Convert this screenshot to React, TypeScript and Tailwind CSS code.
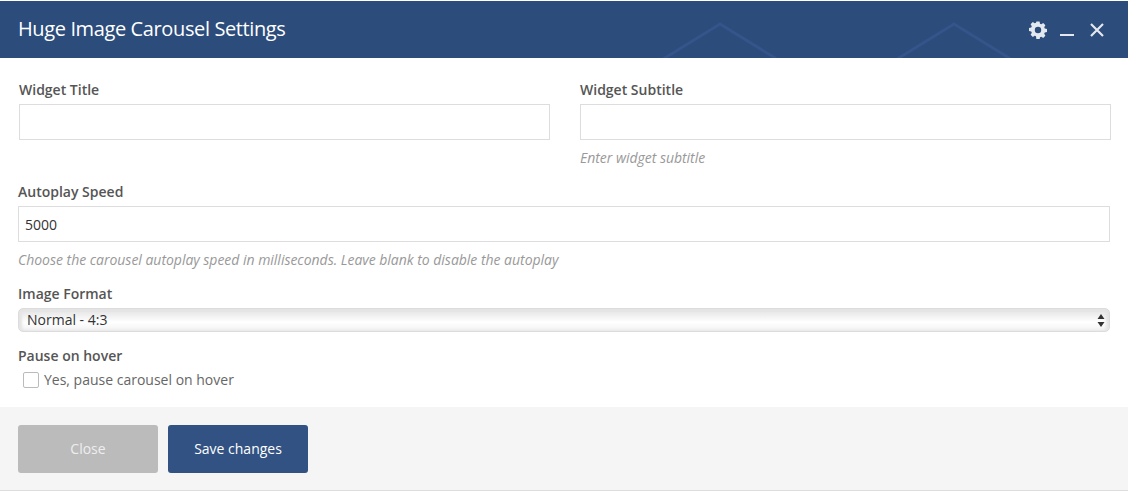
function HeaderIcons() {
  return (
    <div className="flex items-center text-[#e3e7ee]">
      {/* gear */}
      <svg width="18" height="18" viewBox="0 0 18 18" fill="currentColor" fillRule="evenodd">
        <path d="M7.4 0.5h3.2l.4 2.2 1.3.6 1.9-1.2 2.2 2.2-1.2 1.9.6 1.3 2.2.4v3.2l-2.2.4-.6 1.3 1.2 1.9-2.2 2.2-1.9-1.2-1.3.6-.4 2.2H7.4L7 15.3l-1.3-.6-1.9 1.2-2.2-2.2 1.2-1.9-.6-1.3-2.2-.4V6.9l2.2-.4.6-1.3-1.2-1.9 2.2-2.2 1.9 1.2L7 1.7zM9 5.8a3.2 3.2 0 1 0 0 6.4 3.2 3.2 0 0 0 0-6.4z" />
      </svg>
      <span className="ml-[13px] mt-[11px] block h-[2px] w-[14px] bg-[#e3e7ee]" />
      <svg width="14" height="14" viewBox="0 0 14 14" stroke="currentColor" strokeWidth="2.2" className="ml-[16px]">
        <path d="M1 1l12 12M13 1L1 13" />
      </svg>
    </div>
  );
}

export default function App() {
  return (
    <div className="h-[492px] w-[1128px] overflow-hidden bg-white pt-px font-['Open_Sans',sans-serif] text-[#555]">
      {/* Header */}
      <div className="relative flex h-[57px] items-center justify-between overflow-hidden bg-[#2c4c7c] pl-[18px] pr-[24px]">
        <h1 className="-mt-[2px] text-[20px] leading-none tracking-[-0.38px] text-white">Huge Image Carousel Settings</h1>
        <svg className="absolute left-[640px] top-0" width="400" height="57" viewBox="0 0 400 57" fill="none" stroke="#34548a" strokeWidth="3">
          <path d="M20 60L80 23L140 60M254 60L314 23L374 60" />
        </svg>
        <div className="relative">
          <HeaderIcons />
        </div>
      </div>

      {/* Form */}
      <div className="h-[349px] px-[18px]">
        <div className="grid grid-cols-[531px_531px] gap-x-[30px] pl-px pt-[22px]">
          <div>
            <label className="block text-[14px] font-semibold leading-[19px]">Widget Title</label>
            <input type="text" className="mt-[5px] block h-[36px] w-full border border-[#ddd] bg-white" />
          </div>
          <div>
            <label className="block text-[14px] font-semibold leading-[19px]">Widget Subtitle</label>
            <input type="text" className="mt-[5px] block h-[36px] w-full border border-[#ddd] bg-white" />
            <p className="mt-[9px] text-[14px] italic leading-[17px] tracking-[-0.023px] text-[#999]">Enter widget subtitle</p>
          </div>
        </div>

        <div className="mt-[16px]">
          <label className="block text-[14px] font-semibold leading-[19px]">Autoplay Speed</label>
          <input
            type="text"
            defaultValue="5000"
            className="mt-[5px] block h-[36px] w-[1092px] border border-[#ddd] bg-white px-[6px] text-[14px] text-[#333]"
          />
          <p className="mt-[9px] text-[14px] italic leading-[17px] tracking-[-0.023px] text-[#999]">
            Choose the carousel autoplay speed in milliseconds. Leave blank to disable the autoplay
          </p>
        </div>

        <div className="mt-[16px]">
          <label className="block text-[14px] font-semibold leading-[19px]">Image Format</label>
          <div className="relative mt-[5px] w-[1092px]">
            <select className="block h-[24px] w-full appearance-none rounded-[5px] border border-[#dcdcdc] bg-gradient-to-b from-[#e2e2e2] via-white via-60% to-[#f2f2f2] pl-[8px] text-[14px] leading-[20px] text-[#333] shadow-[inset_3px_0_3px_#e4e4e4,inset_-3px_0_3px_#e4e4e4]">
              <option>Normal - 4:3</option>
            </select>
            <svg className="absolute right-[5px] top-[6px]" width="8" height="13" viewBox="0 0 8 13" fill="#333">
              <path d="M4 0L7.5 5H.5zM4 13L.5 8h7z" />
            </svg>
          </div>
        </div>

        <div className="mt-[14px]">
          <label className="block text-[14px] font-semibold leading-[19px]">Pause on hover</label>
          <label className="mt-[5px] flex items-center pl-[5px] text-[14px] leading-[19px] text-[#666]">
            <input type="checkbox" className="h-[16px] w-[16px] appearance-none rounded-[2px] border border-[#bbb] bg-white" />
            <span className="ml-[5px]">Yes, pause carousel on hover</span>
          </label>
        </div>
      </div>

      {/* Footer */}
      <div className="flex h-[84px] items-start gap-[10px] border-b border-[#ddd] bg-[#f5f5f5] pl-[18px] pt-[18px]">
        <button className="h-[48px] w-[140px] rounded-[3px] bg-[#bbb] pb-[2px] text-[14px] text-[#eee]">Close</button>
        <button className="h-[48px] w-[140px] rounded-[3px] bg-[#315283] pb-[2px] text-[14px] text-white">Save changes</button>
      </div>
    </div>
  );
}
